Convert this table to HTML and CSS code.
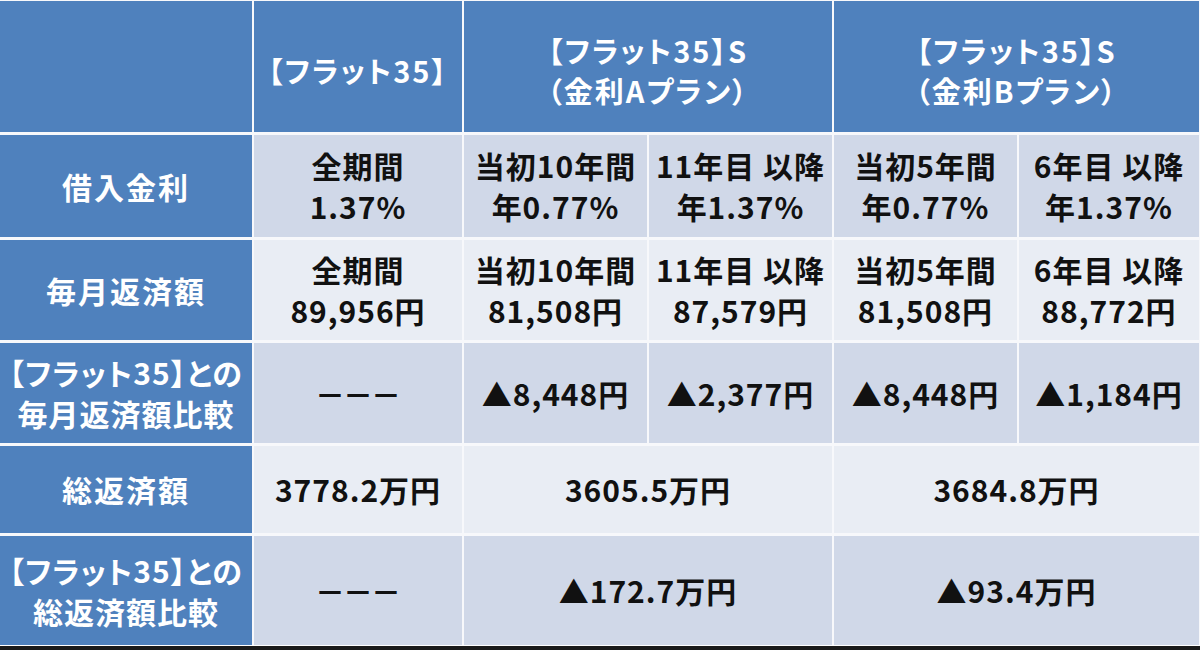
FILE: index.html
```html
<!DOCTYPE html>
<html lang="ja">
<head>
<meta charset="utf-8">
<title>フラット35 比較表</title>
<link rel="stylesheet" href="styles.css">
</head>
<body>
<div class="page">
  <div class="grid">
    <div class="cell head"></div>
    <div class="cell head">【フラット35】</div>
    <div class="cell head span2"><div class="stack"><span>【フラット35】S</span><span>（金利Aプラン）</span></div></div>
    <div class="cell head span2"><div class="stack"><span>【フラット35】S</span><span>（金利Bプラン）</span></div></div>

    <div class="cell label">借入金利</div>
    <div class="cell dark">全期間<br>1.37%</div>
    <div class="cell dark">当初10年間<br>年0.77%</div>
    <div class="cell dark">11年目 以降<br>年1.37%</div>
    <div class="cell dark">当初5年間<br>年0.77%</div>
    <div class="cell dark">6年目 以降<br>年1.37%</div>

    <div class="cell label">毎月返済額</div>
    <div class="cell light">全期間<br>89,956円</div>
    <div class="cell light">当初10年間<br>81,508円</div>
    <div class="cell light">11年目 以降<br>87,579円</div>
    <div class="cell light">当初5年間<br>81,508円</div>
    <div class="cell light">6年目 以降<br>88,772円</div>

    <div class="cell label tight">【フラット35】との<br>毎月返済額比較</div>
    <div class="cell dark"><span class="dashes">－－－</span></div>
    <div class="cell dark">▲8,448円</div>
    <div class="cell dark">▲2,377円</div>
    <div class="cell dark">▲8,448円</div>
    <div class="cell dark">▲1,184円</div>

    <div class="cell label">総返済額</div>
    <div class="cell light">3778.2万円</div>
    <div class="cell light span2">3605.5万円</div>
    <div class="cell light span2">3684.8万円</div>

    <div class="cell label tight">【フラット35】との<br>総返済額比較</div>
    <div class="cell dark"><span class="dashes">－－－</span></div>
    <div class="cell dark span2">▲172.7万円</div>
    <div class="cell dark span2">▲93.4万円</div>
  </div>
  <div class="footer-bar"></div>
</div>
</body>
</html>
```

FILE: styles.css
```css
html, body {
  margin: 0;
  padding: 0;
  background: #ffffff;
}

.page {
  width: 1200px;
  height: 650px;
  display: flex;
  flex-direction: column;
  overflow: hidden;
}

.grid {
  display: grid;
  grid-template-columns: 252px 208px 183px 183px 183px 180px;
  grid-template-rows: 131px 102px 100px 100px 87px 109px;
  column-gap: 2px;
  row-gap: 3px;
  padding-top: 1px;
  background: #f7f8fb;
  font-family: "Noto Sans CJK JP", "Noto Sans", sans-serif;
  font-weight: 700;
  font-size: 30px;
  line-height: 41px;
  font-feature-settings: "palt";
  letter-spacing: 1px;
}

.cell {
  display: flex;
  align-items: center;
  justify-content: center;
  text-align: center;
  white-space: nowrap;
}

.span2 {
  grid-column: span 2;
}

.head {
  background: #4f81bd;
  color: #ffffff;
  font-size: 29px;
  line-height: 40px;
  padding-top: 6px;
  letter-spacing: 2px;
}

.stack {
  display: flex;
  flex-direction: column;
  align-items: center;
}

.label {
  background: #4f81bd;
  color: #ffffff;
  letter-spacing: 2px;
}

.label.tight {
  letter-spacing: 1px;
}

.dark {
  background: #d0d8e8;
  color: #111111;
}

.light {
  background: #e9edf4;
  color: #111111;
}

.dashes {
  font-size: 30px;
  font-feature-settings: normal;
  letter-spacing: -2px;
  margin-right: 2px;
}

.footer-bar {
  flex: 1;
  background: #1a1a1a;
  margin-top: 1px;
}
```
